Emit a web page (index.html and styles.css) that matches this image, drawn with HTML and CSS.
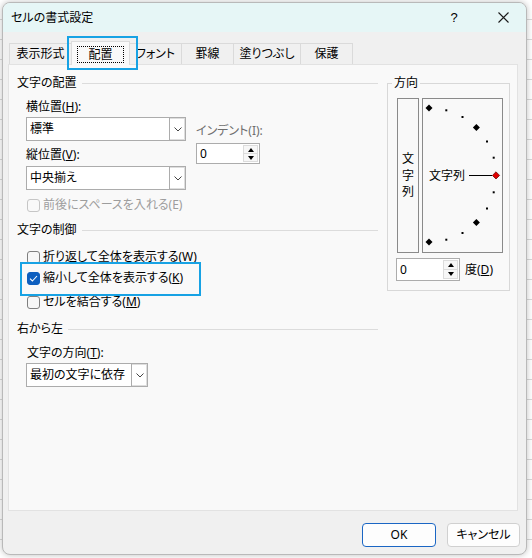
FILE: index.html
```html
<!DOCTYPE html>
<html lang="ja">
<head>
<meta charset="utf-8">
<title>セルの書式設定</title>
<link rel="stylesheet" href="styles.css">
</head>
<body>
<div class="dialog">
  <div class="titlebar">
    <span class="title">セルの書式設定</span>
    <span class="cap help">?</span>
    <span class="cap close"><svg width="11" height="11" viewBox="0 0 11 11"><path d="M0.5 0.5 L10.5 10.5 M10.5 0.5 L0.5 10.5" stroke="#1a1a1a" stroke-width="1.1" fill="none"/></svg></span>
  </div>
  <div class="tabs">
    <div class="tab t1">表示形式</div>
    <div class="tab active"><span class="focus">配置</span></div>
    <div class="tab t3">フォント</div>
    <div class="tab t4">罫線</div>
    <div class="tab t5">塗りつぶし</div>
    <div class="tab t6">保護</div>
  </div>
  <div class="panel">
    <div class="left">
      <div class="sec-head"><span>文字の配置</span><i class="rule"></i></div>
      <div class="align-row">
        <div class="align-col">
          <div class="lbl l-h">横位置(<u>H</u>):</div>
          <div class="combo wide"><span class="cv">標準</span><span class="cb"><svg width="8" height="5" viewBox="0 0 8 5"><polyline points="0.5,0.5 4,4 7.5,0.5" fill="none" stroke="#444" stroke-width="1"/></svg></span></div>
          <div class="lbl l-v">縦位置(<u>V</u>):</div>
          <div class="combo wide c2"><span class="cv">中央揃え</span><span class="cb"><svg width="8" height="5" viewBox="0 0 8 5"><polyline points="0.5,0.5 4,4 7.5,0.5" fill="none" stroke="#444" stroke-width="1"/></svg></span></div>
        </div>
        <div class="indent">
          <div class="lbl dis">インデント(I):</div>
          <div class="spin s1">
            <span class="sv">0</span>
            <span class="sb"><span class="up"></span><span class="dn"></span></span>
          </div>
        </div>
      </div>
      <div class="chk r-e"><span class="box disbox"></span><span class="distext">前後にスペースを入れる(E)</span></div>

      <div class="sec-head h2"><span>文字の制御</span><i class="rule"></i></div>
      <div class="chk r-w"><span class="box"></span><span>折り返して全体を表示する(W)</span></div>
      <div class="chk r-k"><span class="box on"><svg width="9" height="7" viewBox="0 0 9 7"><polyline points="1,3.6 3.4,6 8,1" fill="none" stroke="#fff" stroke-width="1.1"/></svg></span><span>縮小して全体を表示する(<u>K</u>)</span></div>
      <div class="chk r-m"><span class="box"></span><span>セルを結合する(<u>M</u>)</span></div>

      <div class="sec-head h3"><span>右から左</span><i class="rule"></i></div>
      <div class="lbl l-t">文字の方向(<u>T</u>):</div>
      <div class="combo narrow"><span class="cv">最初の文字に依存</span><span class="cb"><svg width="8" height="5" viewBox="0 0 8 5"><polyline points="0.5,0.5 4,4 7.5,0.5" fill="none" stroke="#444" stroke-width="1"/></svg></span></div>
    </div>

    <fieldset class="orient">
      <legend>方向</legend>
      <div class="boxes">
        <div class="vbox"><span class="vtext">文字列</span></div>
        <div class="abox">
          <svg width="79" height="153" viewBox="0 0 79 153">
            <polygon points="6,5.5 9.5,9 6,12.5 2.5,9" fill="#000"/>
            <rect x="22.3" y="10.3" width="2" height="2" fill="#000"/>
            <rect x="38.5" y="17" width="2" height="2" fill="#000"/>
            <polygon points="53.4,25.1 56.9,28.6 53.4,32.1 49.9,28.6" fill="#000"/>
            <rect x="63" y="41.5" width="2" height="2" fill="#000"/>
            <rect x="69.7" y="57.7" width="2" height="2" fill="#000"/>
            <line x1="46" y1="76.5" x2="69" y2="76.5" stroke="#000" stroke-width="1"/>
            <polygon points="73,72.8 76.6,76.4 73,80 69.4,76.4" fill="#e00000" stroke="#5a0000" stroke-width="0.7"/>
            <rect x="69.7" y="92.3" width="2" height="2" fill="#000"/>
            <rect x="63" y="108.5" width="2" height="2" fill="#000"/>
            <polygon points="53.4,119.9 56.9,123.4 53.4,126.9 49.9,123.4" fill="#000"/>
            <rect x="38.5" y="133" width="2" height="2" fill="#000"/>
            <rect x="22.3" y="139.7" width="2" height="2" fill="#000"/>
            <polygon points="6,139.5 9.5,143 6,146.5 2.5,143" fill="#000"/>
            <text x="6" y="81" class="atext">文字列</text>
          </svg>
        </div>
      </div>
      <div class="deg-row">
        <div class="spin s2">
          <span class="sv">0</span>
          <span class="sb"><span class="up"></span><span class="dn"></span></span>
        </div>
        <span class="deg">度(<u>D</u>)</span>
      </div>
    </fieldset>
  </div>
  <div class="buttons">
    <div class="btn ok">OK</div>
    <div class="btn cancel">キャンセル</div>
  </div>
</div>
<div class="mark m1"></div>
<div class="mark m2"></div>
</body>
</html>
```

FILE: styles.css
```css
html, body {
  margin: 0;
  padding: 0;
}
body {
  width: 532px;
  height: 558px;
  overflow: hidden;
  position: relative;
  font-family: "Noto Sans", "Noto Sans CJK JP", sans-serif;
  font-size: 12px;
  line-height: 16px;
  color: #000;
  font-feature-settings: "palt";
  background: repeating-linear-gradient(to bottom, #ffffff 0 19px, #d9d9d9 19px 20px);
}
u {
  text-decoration: underline;
  text-underline-offset: 1px;
}

.dialog {
  margin: 2px 0 0 2px;
  width: 525px;
  height: 553px;
  box-sizing: border-box;
  border: 1px solid #b9b9b9;
  border-radius: 8px;
  background: #f0f0f0;
  box-shadow: 0 0 6px rgba(0, 0, 0, 0.25);
  overflow: hidden;
  display: flex;
  flex-direction: column;
}

.titlebar {
  height: 29px;
  flex: none;
  background: #e6f6f6;
  display: flex;
  align-items: center;
  padding-left: 8px;
}
.title {
  flex: 1;
  font-size: 12px;
  padding-top: 1px;
}
.cap {
  width: 46px;
  height: 29px;
  display: flex;
  align-items: center;
  justify-content: center;
}
.help {
  font-size: 13px;
  font-family: "Liberation Sans", "Noto Sans", sans-serif;
  padding-top: 1px;
  padding-right: 1px;
}
.close {
  padding-left: 2px;
}

.tabs {
  flex: none;
  display: flex;
  align-items: flex-end;
  padding: 9px 0 0 6px;
}
.tab {
  box-sizing: border-box;
  height: 21px;
  border: 1px solid #dadada;
  border-bottom: none;
  background: #f0f0f0;
  text-align: center;
  line-height: 20px;
  margin-left: -1px;
}
.tab.t1 { width: 63px; margin-left: 0; }
.tab.t3 { width: 53px; }
.tab.t4 { width: 53px; }
.tab.t5 { width: 68px; }
.tab.t6 { width: 53px; }
.tab.active {
  position: relative;
  z-index: 1;
  width: 59px;
  height: 24px;
  margin-bottom: -1px;
  background: #f9f9f9;
  border-color: #dcdcdc;
  padding-top: 4px;
  line-height: 15px;
}
.focus {
  display: inline-block;
  box-sizing: border-box;
  width: 47px;
  height: 17px;
  border: 1px dotted #000;
  line-height: 15px;
}

.panel {
  flex: none;
  box-sizing: border-box;
  margin-left: 5px;
  width: 510px;
  height: 447px;
  border: 1px solid #e2e2e2;
  background: #f9f9f9;
  display: grid;
  grid-template-columns: 361px 123px;
  column-gap: 9px;
  align-items: start;
  padding: 10px 0 0 8px;
}

.left {
  display: flex;
  flex-direction: column;
  align-items: flex-start;
}
.sec-head {
  align-self: stretch;
  display: flex;
  align-items: center;
  height: 16px;
}
.sec-head .rule {
  flex: 1;
  height: 1px;
  background: #dcdcdc;
  margin-left: 5px;
}
.sec-head.h2 { margin-top: 9px; }
.sec-head.h3 { margin-top: 11px; }

.lbl {
  height: 16px;
  white-space: nowrap;
}
.align-row {
  display: flex;
  margin-left: 9px;
}
.align-col {
  display: flex;
  flex-direction: column;
}
.l-h { margin-top: 8px; }
.l-v { margin-top: 6px; }
.combo.c2 { margin-top: 3px; }
.l-t { margin-top: 8px; margin-left: 10px; }

.combo {
  box-sizing: border-box;
  height: 24px;
  border: 1px solid #acacac;
  background: #fff;
  display: flex;
  margin-top: 2px;
}
.combo.wide { width: 160px; }
.combo.narrow { width: 122px; margin-left: 9px; }
.cv {
  flex: 1;
  padding-left: 3px;
  line-height: 22px;
  white-space: nowrap;
}
.cb {
  width: 16px;
  box-sizing: border-box;
  border-left: 1px solid #acacac;
  box-shadow: inset -1px -1px 0 #dedede, inset 0 1px 0 #dedede;
  display: flex;
  align-items: center;
  justify-content: center;
  padding-top: 1px;
}

.indent {
  margin-left: 10px;
  padding-top: 32px;
}
.dis {
  color: #6f6f6f;
}

.spin {
  box-sizing: border-box;
  border: 1px solid #acacac;
  background: #fff;
  display: flex;
  width: 64px;
  height: 21px;
  margin-top: 4px;
}
.spin .sv {
  flex: 1;
  padding-left: 3px;
  line-height: 19px;
}
.spin .sb {
  width: 16px;
  display: flex;
  flex-direction: column;
  padding: 1px 1px 1px 0;
  box-sizing: border-box;
}
.spin .up, .spin .dn {
  flex: 1;
  border: 1px solid #dcdcdc;
  background: #f7f7f7;
  position: relative;
}
.spin .dn { border-top: none; }
.spin .up::after, .spin .dn::after {
  content: "";
  position: absolute;
  left: 50%;
  top: 50%;
  margin-left: -3px;
  width: 0;
  height: 0;
  border-left: 3px solid transparent;
  border-right: 3px solid transparent;
}
.spin .up::after {
  margin-top: -2px;
  border-bottom: 4px solid #000;
}
.spin .dn::after {
  margin-top: -2px;
  border-top: 4px solid #000;
}

.chk {
  display: flex;
  align-items: center;
  height: 16px;
  margin-left: 10px;
  white-space: nowrap;
}
.r-e { margin-top: 7px; }
.r-w { margin-top: 11px; }
.r-k { margin-top: 5px; }
.r-m { margin-top: 8px; }
.box {
  box-sizing: border-box;
  width: 13px;
  height: 13px;
  border: 1px solid #7f7f7f;
  border-radius: 3px;
  background: #f7f7f7;
  margin-right: 3px;
  display: flex;
  align-items: center;
  justify-content: center;
}
.box.disbox {
  border-color: #c6c6c6;
  background: #f9f9f9;
}
.box.on {
  background: #0e5fbf;
  border-color: #0e5fbf;
}
.distext {
  color: #9d9d9d;
}

.orient {
  margin: 0;
  padding: 7px 6px 9px 9px;
  border: 1px solid #d8d8d8;
  min-width: 0;
  box-sizing: border-box;
  width: 123px;
}
.orient legend {
  padding: 0 2px;
  margin-left: -5px;
  line-height: 16px;
}
.boxes {
  display: flex;
  gap: 3px;
}
.vbox {
  box-sizing: border-box;
  width: 23px;
  height: 155px;
  border: 1px solid #8a8a8a;
  display: flex;
  align-items: center;
  justify-content: center;
}
.vtext {
  width: 12px;
  line-height: 16.5px;
  word-break: break-all;
  text-align: center;
  padding-top: 1px;
}
.abox {
  box-sizing: border-box;
  width: 81px;
  height: 155px;
  border: 1px solid #8a8a8a;
}
.abox svg {
  display: block;
}
.atext {
  font-family: "Noto Sans CJK JP", sans-serif;
  font-size: 12px;
}
.deg-row {
  display: flex;
  align-items: center;
  margin-top: 5px;
  margin-left: -1px;
}
.spin.s2 {
  height: 23px;
  margin-top: 0;
}
.spin.s2 .sv {
  line-height: 21px;
}
.deg {
  margin-left: 5px;
  padding-top: 1px;
}

.buttons {
  display: flex;
  justify-content: flex-end;
  gap: 11px;
  padding-right: 6px;
  margin-top: 12px;
}
.btn {
  box-sizing: border-box;
  height: 24px;
  border-radius: 4px;
  background: #fdfdfd;
  text-align: center;
  line-height: 22px;
}
.btn.ok {
  width: 74px;
  border: 1px solid #1a66c4;
}
.btn.cancel {
  width: 73px;
  border: 1px solid #d0d0d0;
}

.mark {
  position: absolute;
  box-sizing: border-box;
  border: 2px solid #17a2e4;
}
.mark.m1 {
  left: 67px;
  top: 36px;
  width: 71px;
  height: 34px;
}
.mark.m2 {
  left: 20px;
  top: 262px;
  width: 181px;
  height: 34px;
}
```
